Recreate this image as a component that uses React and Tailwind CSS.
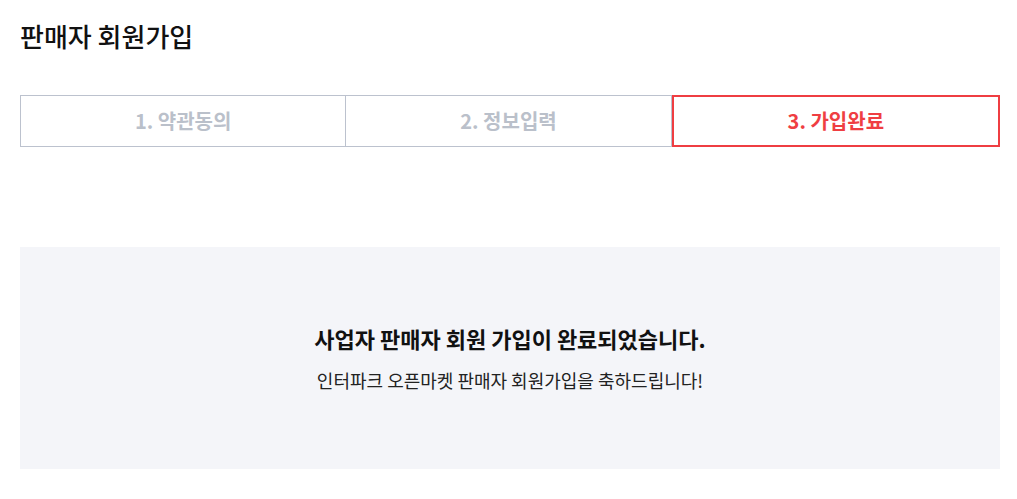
const steps = [
  { label: "1. 약관동의", active: false },
  { label: "2. 정보입력", active: false },
  { label: "3. 가입완료", active: true },
];

export default function App() {
  return (
    <div
      className="w-[980px] ml-5 bg-white text-[#111]"
      style={{ fontFamily: '"Noto Sans CJK KR", "Noto Sans", sans-serif' }}
    >
      {/* TITLE */}
      <h1 className="pt-[17px] text-[26px] font-medium leading-[38px]">
        판매자 회원가입
      </h1>

      {/* STEPS */}
      <div className="mt-[40px] flex h-[52px]">
        {steps.map((s, i) => (
          <div
            key={s.label}
            className={
              s.active
                ? "flex flex-1 items-center justify-center border-2 border-[#ef3e42] text-[20px] font-bold text-[#ef3e42]"
                : i === 0
                ? "flex flex-1 items-center justify-center border border-[#bcc2ce] text-[20px] font-bold text-[#bac0ca]"
                : "flex flex-1 items-center justify-center border border-l-0 border-[#bcc2ce] text-[20px] font-bold text-[#bac0ca]"
            }
          >
            {s.label}
          </div>
        ))}
      </div>

      {/* RESULT */}
      <div className="mt-[100px] flex h-[222px] flex-col items-center justify-center bg-[#f4f5f9]">
        <p className="text-[22px] font-bold leading-[30px]">
          사업자 판매자 회원 가입이 완료되었습니다.
        </p>
        <p className="mt-[14px] text-[18px] leading-[26px] text-[#222]">
          인터파크 오픈마켓 판매자 회원가입을 축하드립니다!
        </p>
      </div>
    </div>
  );
}
